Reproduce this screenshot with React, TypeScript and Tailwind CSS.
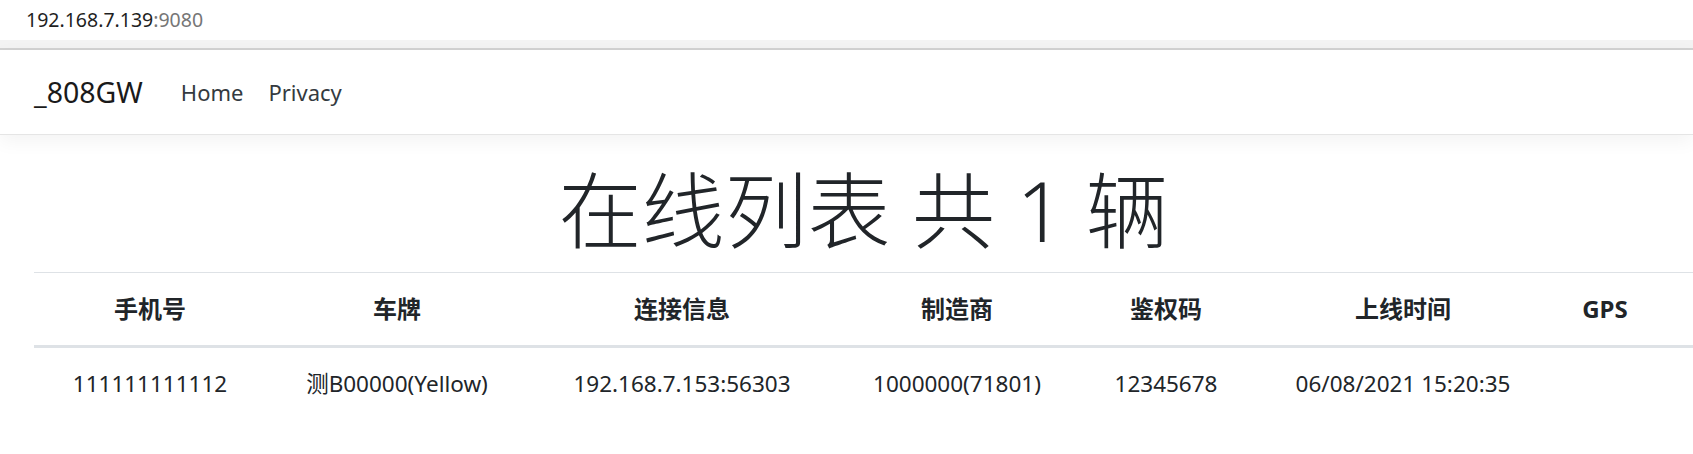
import React from "react";

type Vehicle = {
  phone: string;
  plate: string;
  remote: string;
  maker: string;
  authCode: string;
  onlineAt: string;
  gps: string;
};

const columns = ["手机号", "车牌", "连接信息", "制造商", "鉴权码", "上线时间", "GPS"];

// widths measured from the reference so column centres line up
const colWidths = [232, 262, 308, 242, 176, 298];

const vehicles: Vehicle[] = [
  {
    phone: "111111111112",
    plate: "测B00000(Yellow)",
    remote: "192.168.7.153:56303",
    maker: "1000000(71801)",
    authCode: "12345678",
    onlineAt: "06/08/2021 15:20:35",
    gps: "",
  },
];

const sans = "font-['Noto_Sans','Noto_Sans_CJK_SC',sans-serif]";

export default function App() {
  return (
    <div className={`h-[454px] w-[1693px] overflow-hidden bg-white text-[#212529] ${sans}`}>
      {/* browser address bar */}
      <div className="flex h-[40px] items-center pl-[26px] text-[19.5px] text-[#1f1f1f]">
        192.168.7.139<span className="text-[#767676]">:9080</span>
      </div>
      <div className="h-[8px] bg-[#f3f3f3]" />
      <div className="h-[2px] bg-[#d2d2d2]" />

      <nav className="flex h-[85px] items-center border-b border-[#e5e5e5] pl-[34px] shadow-[0_6px_18px_rgba(0,0,0,0.05)]">
        <a href="#" className="text-[28.5px] leading-none text-[#1a1a1a]">
          _808GW
        </a>
        <ul className="ml-[38px] flex gap-[25px] text-[22px] text-[#343a40]">
          <li>
            <a href="#">Home</a>
          </li>
          <li>
            <a href="#">Privacy</a>
          </li>
        </ul>
      </nav>

      <main className="pl-[34px] pt-[24px]">
        <h1 className="mb-[12px] h-[101px] text-center text-[83px] font-light leading-[101px]">
          在线列表 共 1 辆
        </h1>

        <table className="w-[1659px] table-fixed border-collapse text-center text-[22.5px] leading-[36px]">
          <colgroup>
            {colWidths.map((w, i) => (
              <col key={i} style={{ width: w }} />
            ))}
            <col />
          </colgroup>
          <thead>
            <tr>
              {columns.map((c, i) => (
                <th
                  key={c}
                  className={`border-t border-b-[3px] border-[#dee2e6] py-[18px] text-[24px] font-bold ${
                    i === columns.length - 1 ? "pr-[53px] pl-[18px] text-[23px]" : "px-[18px]"
                  }`}
                >
                  {c}
                </th>
              ))}
            </tr>
          </thead>
          <tbody>
            {vehicles.map((v) => (
              <tr key={v.phone}>
                <td className="px-[18px] py-[18px]">{v.phone}</td>
                <td className="px-[18px] py-[18px]">{v.plate}</td>
                <td className="px-[18px] py-[18px]">{v.remote}</td>
                <td className="px-[18px] py-[18px]">{v.maker}</td>
                <td className="px-[18px] py-[18px]">{v.authCode}</td>
                <td className="px-[18px] py-[18px]">{v.onlineAt}</td>
                <td className="py-[18px] pl-[18px] pr-[53px]">{v.gps}</td>
              </tr>
            ))}
          </tbody>
        </table>
      </main>
    </div>
  );
}
